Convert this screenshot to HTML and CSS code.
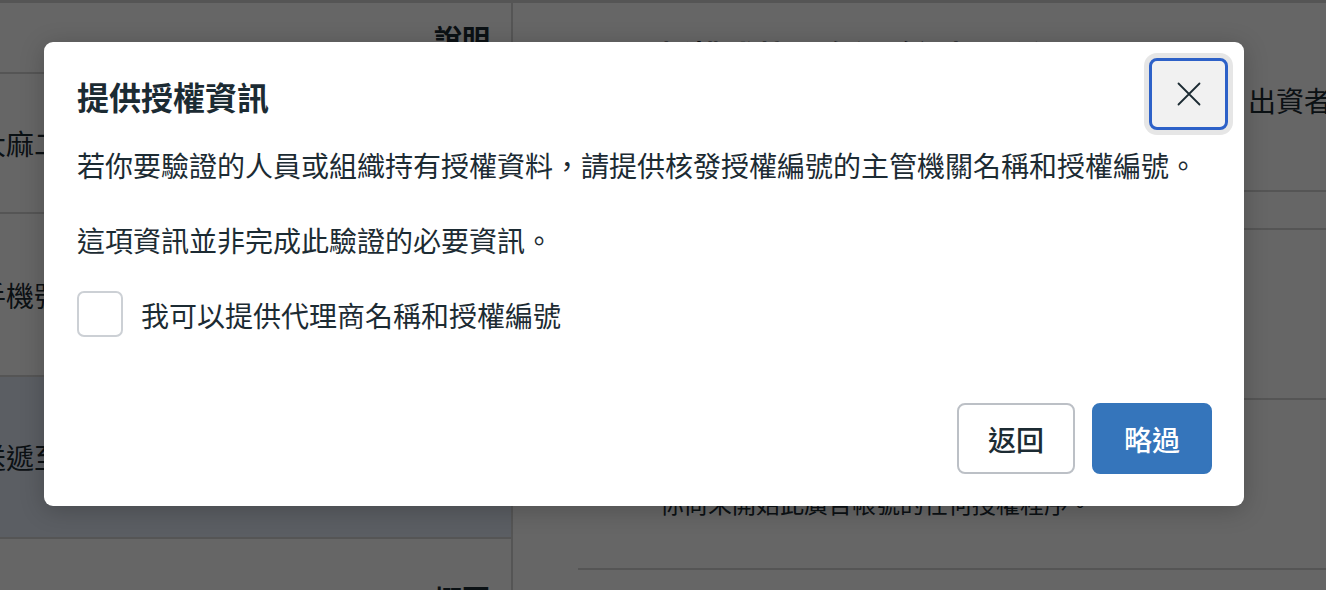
FILE: index.html
```html
<!DOCTYPE html>
<html lang="zh-Hant">
<head>
<meta charset="utf-8">
<title>提供授權資訊</title>
<link rel="stylesheet" href="styles.css">
</head>
<body>
<div class="page">
  <div class="col-left">
    <div class="cell cell-head">說明</div>
    <div class="cell cell-row1"><span class="cell-text">大麻二號商業登記證明文件</span></div>
    <div class="cell cell-row2"><span class="cell-text">手機號碼驗證與聯絡資訊</span></div>
    <div class="cell cell-row3 cell-selected"><span class="cell-text">送遞至主管機關的文件</span></div>
    <div class="cell cell-row4">概要</div>
  </div>
  <div class="col-right">
    <div class="r-head">授權或執照資訊驗證相關說明</div>
    <div class="r-line">請確認此廣告帳號的商家名稱與付款資訊符合<span class="r-tail">出資者資訊</span></div>
    <div class="r-divider r-d1"></div>
    <div class="r-divider r-d2"></div>
    <div class="r-divider r-d3"></div>
    <div class="r-note">你尚未開始此廣告帳號的任何授權程序。</div>
    <div class="r-divider r-d4"></div>
  </div>
</div>

<div class="backdrop"></div>

<div class="modal" role="dialog" aria-labelledby="modal-title">
  <div class="modal-header">
    <h2 class="modal-title" id="modal-title">提供授權資訊</h2>
    <button class="close-btn" aria-label="關閉">
      <svg class="close-icon" width="24" height="24" viewBox="0 0 24 24" aria-hidden="true">
        <path d="M1.5 1.5 L22.5 22.5 M22.5 1.5 L1.5 22.5" fill="none" stroke="#1c2b33" stroke-width="1.8" stroke-linecap="round"/>
      </svg>
    </button>
  </div>
  <p class="modal-text text-first">若你要驗證的人員或組織持有授權資料，請提供核發授權編號的主管機關名稱和授權編號。</p>
  <p class="modal-text text-second">這項資訊並非完成此驗證的必要資訊。</p>
  <label class="check-row">
    <span class="checkbox"></span>
    <span class="check-label">我可以提供代理商名稱和授權編號</span>
  </label>
  <div class="modal-footer">
    <button class="btn btn-secondary">返回</button>
    <button class="btn btn-primary">略過</button>
  </div>
</div>
</body>
</html>
```

FILE: styles.css
```css
* {
  box-sizing: border-box;
}

html,
body {
  margin: 0;
  padding: 0;
}

body {
  width: 1326px;
  height: 590px;
  overflow: hidden;
  position: relative;
  background: #ffffff;
  font-family: "Noto Sans CJK TC", "Noto Sans", sans-serif;
  color: #1c2b33;
}

/* ---------- page behind the dialog ---------- */
.page {
  display: flex;
  height: 590px;
  border-top: 3px solid #d4d4d4;
}

.col-left {
  width: 513px;
  flex: none;
  border-right: 2px solid #d4d4d4;
  overflow: hidden;
}

.cell {
  display: flex;
  align-items: center;
  border-bottom: 2px solid #d4d4d4;
  font-size: 28px;
  line-height: 40px;
  white-space: nowrap;
  overflow: hidden;
}

.cell-text {
  margin-left: -22px;
}

.cell-head {
  height: 71px;
  justify-content: flex-end;
  padding-right: 21px;
  font-weight: 700;
}

.cell-row1 {
  height: 140px;
}

.cell-row2 {
  height: 163px;
}

.cell-row3 {
  height: 162px;
}

.cell-selected {
  background: #e4ebf8;
}

.cell-row4 {
  align-items: flex-start;
  justify-content: flex-end;
  padding-top: 40px;
  padding-right: 21px;
  height: 120px;
  font-weight: 700;
  border-bottom: none;
}

.col-right {
  flex: 1;
  overflow: hidden;
  white-space: nowrap;
}

.r-head {
  margin-top: 32px;
  padding-left: 147px;
  font-size: 32px;
  line-height: 40px;
  font-weight: 700;
}

.r-line {
  margin-top: 5px;
  padding-left: 165px;
  font-size: 28px;
  line-height: 40px;
}

.r-tail {
  margin-left: 10px;
}

.r-divider {
  margin-left: 65px;
  height: 2px;
  background: #d4d4d4;
}

.r-d1 {
  margin-top: 70px;
}

.r-d2 {
  margin-top: 36px;
}

.r-d3 {
  margin-top: 168px;
}

.r-note {
  margin-top: 86px;
  padding-left: 147px;
  font-size: 24px;
  line-height: 34px;
}

.r-d4 {
  margin-top: 48px;
}

.backdrop {
  position: absolute;
  inset: 0;
  background: rgba(0, 0, 0, 0.6);
}

/* ---------- dialog ---------- */
.modal {
  position: absolute;
  left: 44px;
  top: 42px;
  width: 1200px;
  background: #ffffff;
  border-radius: 9px;
  padding: 16px 16px 32px 33px;
  box-shadow: 0 4px 24px rgba(0, 0, 0, 0.22);
}

.modal-header {
  display: flex;
  align-items: center;
  justify-content: space-between;
}

.modal-title {
  margin: 0;
  padding-top: 4px;
  font-size: 32px;
  line-height: 40px;
  font-weight: 700;
  color: #1c2b33;
}

.close-btn {
  width: 79px;
  height: 72px;
  padding: 0;
  border: 3px solid #2d61c8;
  border-radius: 8px;
  background: #f1f1f1;
  box-shadow: 0 0 0 5px #e6e6e6;
  display: flex;
  align-items: center;
  justify-content: center;
  cursor: pointer;
}

.close-icon {
  display: block;
}

.modal-text {
  margin: 0;
  font-size: 28px;
  line-height: 40px;
  color: #1c2b33;
}

.text-first {
  margin-top: 15px;
}

.text-second {
  margin-top: 35px;
}

.check-row {
  margin-top: 31px;
  display: flex;
  align-items: center;
  gap: 18px;
}

.checkbox {
  width: 46px;
  height: 46px;
  flex: none;
  border: 2px solid #ccd0d5;
  border-radius: 7px;
  background: #ffffff;
}

.check-label {
  font-size: 28px;
  line-height: 40px;
  color: #1c2b33;
  padding-top: 2px;
}

.modal-footer {
  margin-top: 66px;
  margin-right: 16px;
  display: flex;
  justify-content: flex-end;
  gap: 17px;
}

.btn {
  height: 71px;
  padding: 0 29px;
  border-radius: 8px;
  font-family: "Noto Sans CJK TC", "Noto Sans", sans-serif;
  font-size: 28px;
  font-weight: 500;
  line-height: 40px;
  cursor: pointer;
}

.btn-secondary {
  background: #ffffff;
  color: #1c2b33;
  border: 2px solid #bcc0c6;
}

.btn-primary {
  background: #3575bb;
  color: #ffffff;
  border: 2px solid #3575bb;
  padding: 0 30px;
}
```
